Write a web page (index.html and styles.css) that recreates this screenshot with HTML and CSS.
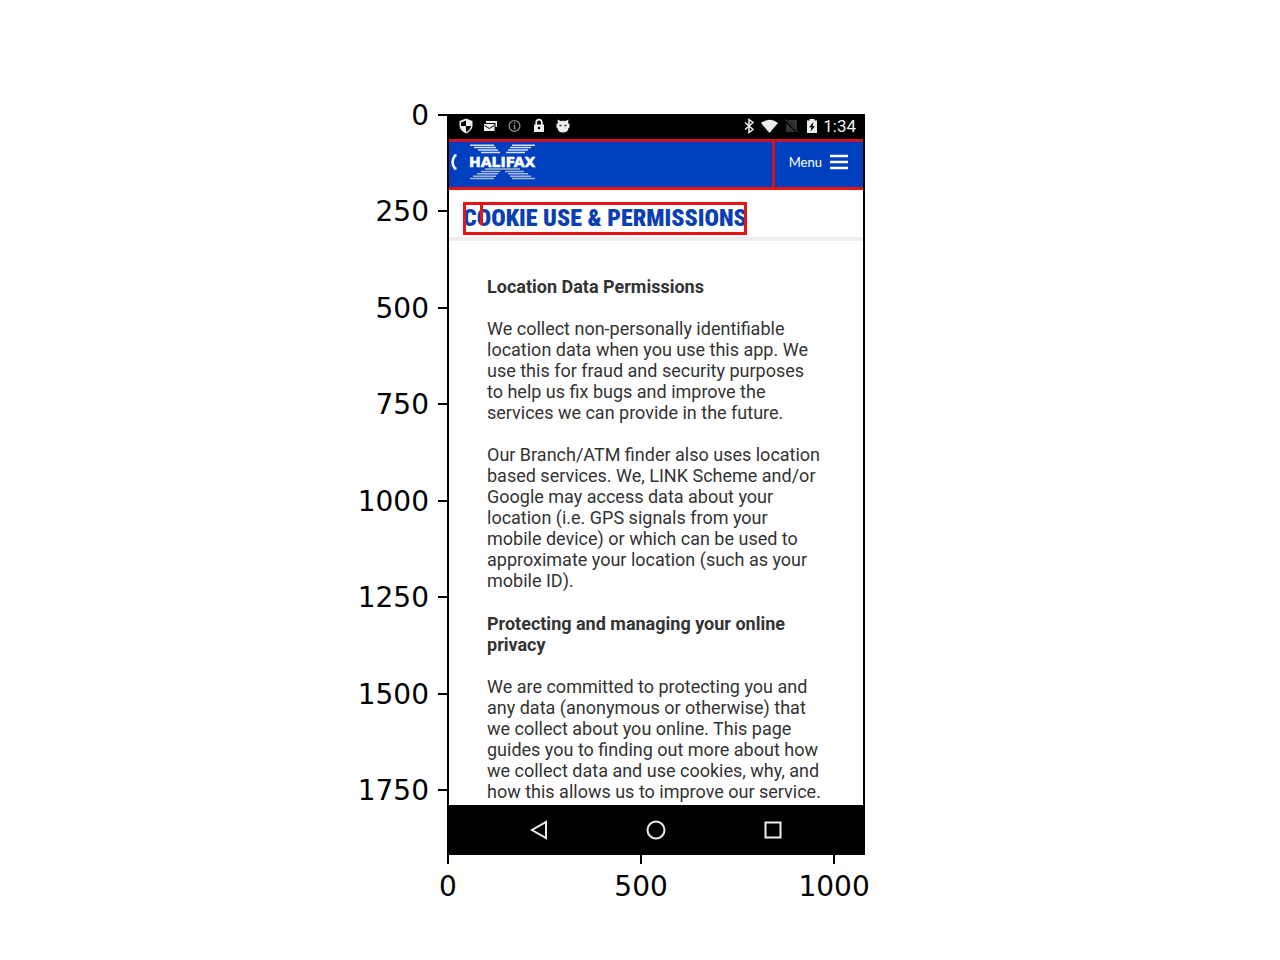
FILE: index.html
```html
<!DOCTYPE html>
<html lang="en">
<head>
<meta charset="utf-8">
<title>Cookie use &amp; permissions</title>
<link rel="stylesheet" href="styles.css">
</head>
<body>
<main class="figure">
  <ol class="y-axis">
    <li><span>0</span></li>
    <li><span>250</span></li>
    <li><span>500</span></li>
    <li><span>750</span></li>
    <li><span>1000</span></li>
    <li><span>1250</span></li>
    <li><span>1500</span></li>
    <li class="rest"><span>1750</span></li>
  </ol>
  <section class="phone">
    <div class="status">
      <svg width="120" height="16" viewBox="0 0 120 16" aria-hidden="true">
        <path d="M8 .5L14.500 3V8Q14 13 8 15.500Q2 13 1.500 8V3Z" fill="#eee"/>
        <path d="M8 2.500V8H3Q3 6 3 4.500ZM8 8H13Q12.300 12 8 14Z" fill="#000"/>
        <path d="M28 3H39V9H37.500V5H28ZM26 6H36.500V13H26Z" fill="#eee"/>
        <path d="M26.500 7.500L31.300 10.500L36.200 7.500" fill="none" stroke="#000"/>
        <circle cx="56.500" cy="8" r="5.400" fill="none" stroke="#8a8a8a" stroke-width="1.300"/>
        <path d="M56.500 4.500V6M56.500 7V11.500" stroke="#8a8a8a" stroke-width="1.500"/>
        <path d="M76 6.500H86V14H76Z" fill="#eee"/>
        <path d="M78.200 7V4.500a2.800 2.800 0 0 1 5.600 0V7" fill="none" stroke="#eee" stroke-width="1.700"/>
        <circle cx="81" cy="10" r="1.300" fill="#000"/>
        <path d="M100 5.500L99.500 1.500L102.500 3Q105 2.500 107.500 3L110.500 1.500L110 5.500H111.500V9.500L110.500 10Q110 14.500 105 14.500Q100 14.500 99.500 10L98.500 9.500V5.500Z" fill="#eee"/>
        <path d="M101.500 7.500H103.500M106.500 7.500H108.500" stroke="#222" stroke-width="1.300"/>
      </svg>
      <div class="status-right">
        <svg width="78" height="16" viewBox="0 0 78 16" aria-hidden="true">
          <path d="M4 4.500L12 11.500L8 14.500V1.500L12 4.500L4 11.500" fill="none" stroke="#eee" stroke-width="1.500"/>
          <path d="M20 5Q28.500-1.500 37 5L28.500 15Z" fill="#eee"/>
          <path d="M47 2H56V14H45V4Z" fill="#333"/>
          <path d="M44 2L57 15" stroke="#000" stroke-width="2.500"/>
          <path d="M44 1.500L57 14.500" stroke="#555"/>
          <path d="M66 2.500H68.500V1H73.500V2.500H76V15H66Z" fill="#eee"/>
          <path d="M72.500 4L68 9.300H70.500L69.500 13.500L74 8.200H71.500Z" fill="#000"/>
        </svg>
        <span>1:34</span>
      </div>
    </div>
    <header class="bar">
      <button class="back" aria-label="Back">
        <svg width="10" height="16" viewBox="0 0 10 16"><path d="M7.500 1.500H6Q3.500 5 3.500 8Q3.500 11 6 14.500H7.500" fill="none" stroke="#fff" stroke-width="2.500"/></svg>
      </button>
      <svg class="logo" width="68" height="38" viewBox="0 0 68 38" role="img" aria-label="Halifax">
        <g stroke="#d5e0f5" stroke-width="1.500">
          <path d="M1 2.200H25M43 2.200H66M5 4.600H27M41 4.600H62M9 7H29M39 7H59M12 9.400H31M37 9.400H56"/>
          <path d="M16 26H51M12 28.400H31M36 28.400H55M8 30.800H29M39 30.800H59M4 33.200H27M41 33.200H62M1 35.600H25M43 35.600H66" stroke="#a9b8d4"/>
        </g>
        <text class="logo-text" x="0" y="24">HALIFAX</text>
      </svg>
      <button class="menu"><span>Menu</span>
        <svg width="18" height="16" viewBox="0 0 18 16" aria-hidden="true"><path d="M0 2H18M0 8H18M0 14H18" stroke="#fff" stroke-width="2.400"/></svg>
      </button>
    </header>
    <div class="title-row">
      <h1 class="title">COOKIE USE &amp; PERMISSIONS</h1>
    </div>
    <article class="content">
      <h2>Location Data Permissions</h2>
      <p>We collect non-personally identifiable location data when you use this app. We use this for fraud and security purposes to help us fix bugs and improve the services we can provide in the future.</p>
      <p>Our Branch/ATM finder also uses location based services. We, LINK Scheme and/or Google may access data about your location (i.e. GPS signals from your mobile device) or which can be used to approximate your location (such as your mobile ID).</p>
      <h2>Protecting and managing your online privacy</h2>
      <p>We are committed to protecting you and any data (anonymous or otherwise) that we collect about you online. This page guides you to finding out more about how we collect data and use cookies, why, and how this allows us to improve our service.</p>
    </article>
    <nav class="nav">
      <button aria-label="Back"><svg width="20" height="20" viewBox="0 0 20 20"><path d="M17 2V18L3 10Z"/></svg></button>
      <button aria-label="Home"><svg width="20" height="20" viewBox="0 0 20 20"><circle cx="10" cy="10" r="8.500"/></svg></button>
      <button aria-label="Recent apps"><svg width="20" height="20" viewBox="0 0 20 20"><path d="M2.500 2.500H17.500V17.500H2.500Z"/></svg></button>
    </nav>
  </section>
  <ol class="x-axis">
    <li><span>0</span></li>
    <li><span>500</span></li>
    <li class="rest"><span>1000</span></li>
  </ol>
</main>
</body>
</html>
```
FILE: styles.css
```css
* { box-sizing: border-box; }
body { margin: 0; background: #fff; color: #000; font-family: "DejaVu Sans", sans-serif; }
h1, h2, p, ol { margin: 0; padding: 0; }
ol { list-style: none; }
button { border: 0; padding: 0; background: none; color: inherit; }
svg { display: block; }

.figure { display: grid; grid-template-columns: 14fr 13fr 13fr; padding: 114px 0 40px; font-size: 28px; line-height: 32px; }

.y-axis { display: flex; flex-direction: column; margin-right: 1px; }
.y-axis li { flex: 250 1 0; display: flex; justify-content: flex-end; align-items: flex-start; gap: 9px; }
.y-axis .rest { flex-grow: 171; }
.y-axis span { margin-top: -14px; }
.y-axis li::after { content: ""; width: 9px; height: 2px; background: #000; }

.x-axis { grid-column: 2; display: flex; margin-left: -1px; }
.x-axis li { flex: 500 1 0; display: flex; flex-direction: column; align-items: flex-start; width: 0; }
.x-axis .rest { flex-grow: 80; }
.x-axis li::before { content: ""; width: 2px; height: 9px; background: #000; }
.x-axis span { width: 80px; margin: 7px 0 0 -39px; text-align: center; }

.phone { margin: 0 -1px; border: 2px solid #000; border-width: 1px 2px; background: #fff; font-family: Roboto, sans-serif; }

.status { display: flex; justify-content: space-between; align-items: center; height: 24px; padding: 0 7px 2px 9px; background: #000; color: #eee; }
.status-right { display: flex; align-items: center; gap: 4px; font-size: 17px; line-height: 22px; }

.bar { display: flex; align-items: stretch; height: 51px; border: solid #e81414; border-width: 3px 0; border-top-color: #cf1428; background: #003fbe; color: #fff; }
.back { padding: 0 0 5px; }
.logo { align-self: flex-start; margin: 1px auto 0 10px; }
.logo-text { font: 700 14px "DejaVu Sans", sans-serif; fill: #fff; stroke: #fff; stroke-width: 0.5px; }
.menu { display: flex; align-items: center; gap: 8px; padding: 0 15px 5px 14px; border-left: 3px solid #cf1428; font: 13px/18px Lato, sans-serif; }

.title-row { display: flex; padding: 12px 14px 2px; border-bottom: 4px solid #eee; }
.title { position: relative; padding: 3px 0; outline: 3px solid #e81414; outline-offset: -3px; color: #0a3fb4; font: 900 24px/27px "Roboto Condensed", "Liberation Sans Narrow", sans-serif; white-space: nowrap; }
.title::before { content: ""; position: absolute; left: 17px; top: 0; width: 3px; height: 23px; background: #e81414; }

.content { display: flex; flex-direction: column; gap: 21px; padding: 34px 41px 3px 38px; color: #333; font-size: 18px; line-height: 21px; }
.content h2 { margin-top: 1px; font-size: 18px; line-height: 21px; font-weight: 700; }

.nav { display: flex; justify-content: space-between; align-items: center; height: 49px; padding: 0 80px; background: #000; }
.nav svg { fill: none; stroke: #eee; stroke-width: 2; }
```
